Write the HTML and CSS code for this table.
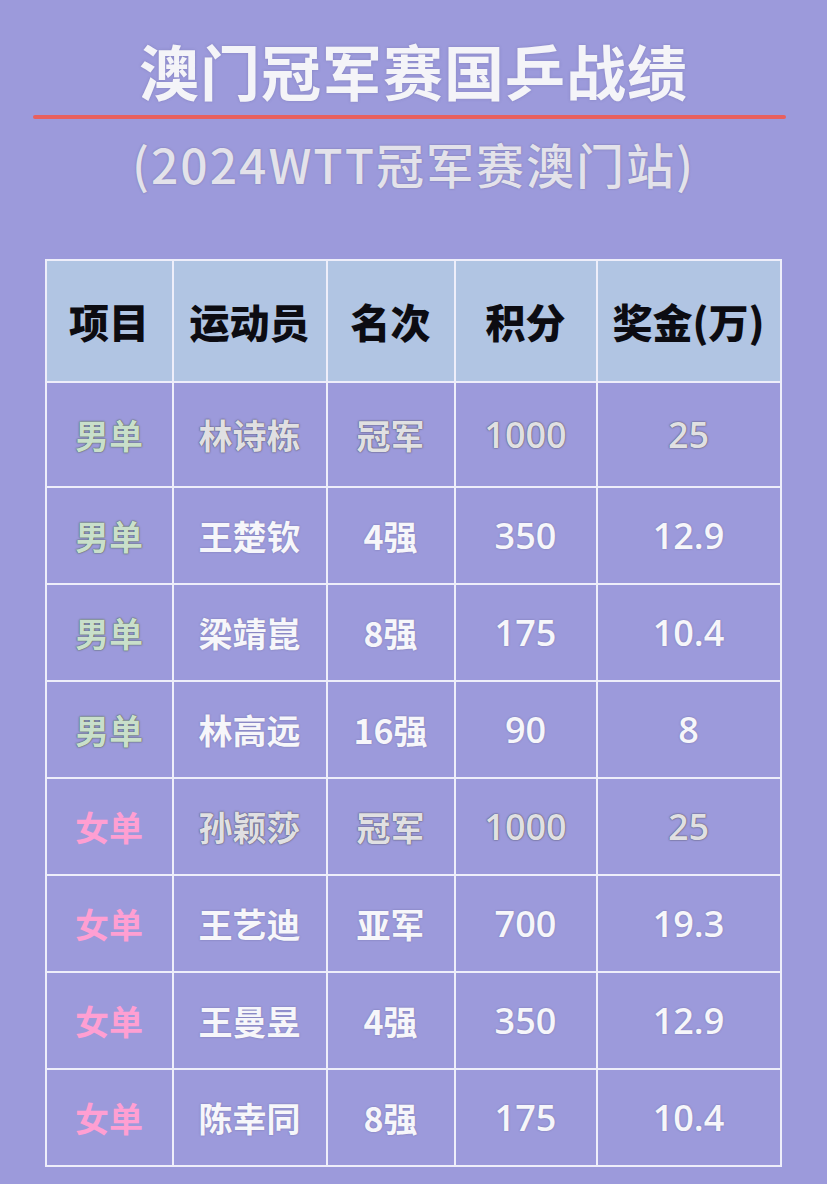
FILE: index.html
```html
<!DOCTYPE html>
<html lang="zh-CN">
<head>
<meta charset="utf-8">
<title>澳门冠军赛国乒战绩</title>
<link rel="stylesheet" href="styles.css">
</head>
<body>
<div class="page">
  <h1 class="title">澳门冠军赛国乒战绩</h1>
  <div class="rule"></div>
  <div class="subtitle">(2024WTT冠军赛澳门站)</div>
  <table class="results">
    <colgroup>
      <col class="c1"><col class="c2"><col class="c3"><col class="c4"><col class="c5">
    </colgroup>
    <thead>
      <tr><th>项目</th><th>运动员</th><th>名次</th><th>积分</th><th>奖金(万)</th></tr>
    </thead>
    <tbody>
      <tr class="first dim"><td class="men">男单</td><td>林诗栋</td><td>冠军</td><td class="num">1000</td><td class="num">25</td></tr>
      <tr><td class="men">男单</td><td>王楚钦</td><td>4强</td><td class="num">350</td><td class="num">12.9</td></tr>
      <tr><td class="men">男单</td><td>梁靖崑</td><td>8强</td><td class="num">175</td><td class="num">10.4</td></tr>
      <tr><td class="men">男单</td><td>林高远</td><td>16强</td><td class="num">90</td><td class="num">8</td></tr>
      <tr class="dim"><td class="women">女单</td><td>孙颖莎</td><td>冠军</td><td class="num">1000</td><td class="num">25</td></tr>
      <tr><td class="women">女单</td><td>王艺迪</td><td>亚军</td><td class="num">700</td><td class="num">19.3</td></tr>
      <tr><td class="women">女单</td><td>王曼昱</td><td>4强</td><td class="num">350</td><td class="num">12.9</td></tr>
      <tr><td class="women">女单</td><td>陈幸同</td><td>8强</td><td class="num">175</td><td class="num">10.4</td></tr>
    </tbody>
  </table>
</div>
</body>
</html>
```

FILE: styles.css
```css
html, body {
  margin: 0;
  padding: 0;
  background: #9c9adb;
}
body {
  font-family: "Noto Sans CJK SC", "Noto Sans", sans-serif;
}
.page {
  width: 827px;
  height: 1184px;
  overflow: hidden;
  display: flex;
  flex-direction: column;
  align-items: center;
}
.title {
  margin: 30px 0 0;
  font-size: 60px;
  line-height: 80px;
  font-weight: 700;
  color: #f4f4f8;
  letter-spacing: 1px;
  text-shadow: 0 0 3px rgba(90, 90, 140, 0.35);
}
.rule {
  align-self: flex-start;
  margin: 5px 0 0 33px;
  width: 753px;
  height: 4px;
  border-radius: 2px;
  background: #e8605e;
}
.subtitle {
  margin: 12px 0 0;
  font-size: 48px;
  line-height: 64px;
  font-weight: 500;
  color: #e3e2ea;
  letter-spacing: 2px;
  text-shadow: 0 0 2px rgba(80, 80, 120, 0.5);
}
.results {
  margin: 64px 0 0 -1px;
  width: 735px;
  border-collapse: collapse;
  table-layout: fixed;
  border: 2px solid #eeeefa;
}
.c1 { width: 127px; }
.c2 { width: 154px; }
.c3 { width: 128px; }
.c4 { width: 142px; }
.c5 { width: 184px; }
.results th,
.results td {
  border: 2px solid #eeeefa;
  text-align: center;
  vertical-align: middle;
  padding: 0;
}
.results th {
  height: 120px;
  background: #b1c5e3;
  color: #0c0c12;
  font-size: 40px;
  font-weight: 900;
}
.results td {
  height: 95px;
  font-size: 34px;
  font-weight: 700;
  color: #f6f6fa;
  text-shadow: 0 0 2px rgba(70, 70, 110, 0.45);
}
.results tr.first td {
  height: 103px;
}
.results td.num {
  font-family: "Open Sans", "Noto Sans", sans-serif;
  font-weight: 600;
  font-size: 36px;
}
.results tr.dim td {
  color: #e0e0e2;
  font-weight: 700;
  text-shadow: 0 0 1px #55556a, 0 0 2px #55556a;
}
.results tr.dim td.num {
  font-weight: 600;
}
.results tr td.men {
  color: #c9dfca;
  font-weight: 700;
  text-shadow: 0 0 1px #4f6455, 0 0 2px #4f6455;
}
.results tr td.women {
  color: #ff9fd2;
  font-weight: 700;
  text-shadow: none;
}
```
